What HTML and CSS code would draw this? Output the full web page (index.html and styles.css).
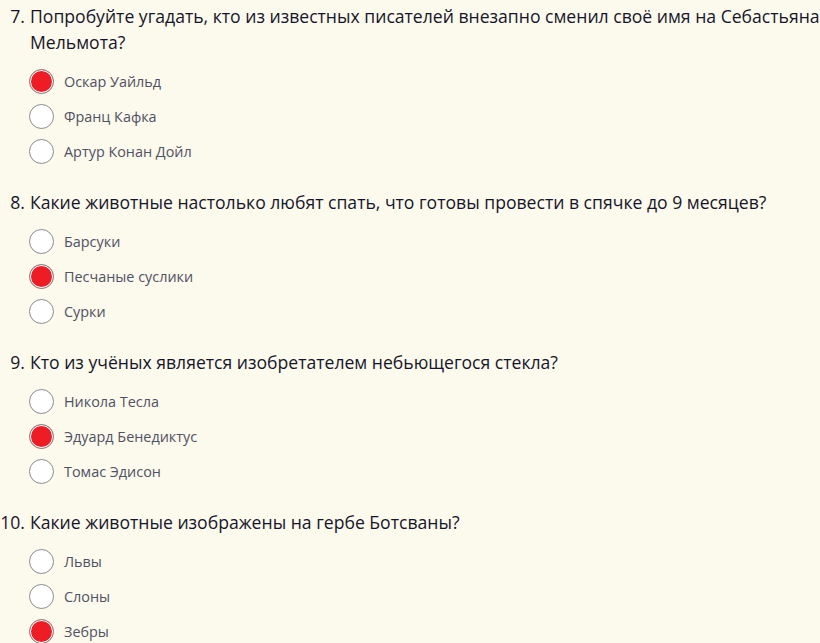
FILE: index.html
```html
<!DOCTYPE html>
<html>
<head>
    <meta charset="UTF-8">
    <title>Викторина</title>
    <link rel="stylesheet" href="styles.css">
</head>
<body>
    <div class="quiz">
        <div class="question">
            <div class="q-title"><span class="q-num">7.</span><span class="q-text">Попробуйте угадать, кто из известных писателей внезапно сменил своё имя на Себастьяна Мельмота?</span></div>
            <label class="option"><input type="radio" name="q7" checked><span>Оскар Уайльд</span></label>
            <label class="option"><input type="radio" name="q7"><span>Франц Кафка</span></label>
            <label class="option"><input type="radio" name="q7"><span>Артур Конан Дойл</span></label>
        </div>

        <div class="question">
            <div class="q-title"><span class="q-num">8.</span><span class="q-text">Какие животные настолько любят спать, что готовы провести в спячке до 9 месяцев?</span></div>
            <label class="option"><input type="radio" name="q8"><span>Барсуки</span></label>
            <label class="option"><input type="radio" name="q8" checked><span>Песчаные суслики</span></label>
            <label class="option"><input type="radio" name="q8"><span>Сурки</span></label>
        </div>

        <div class="question">
            <div class="q-title"><span class="q-num">9.</span><span class="q-text">Кто из учёных является изобретателем небьющегося стекла?</span></div>
            <label class="option"><input type="radio" name="q9"><span>Никола Тесла</span></label>
            <label class="option"><input type="radio" name="q9" checked><span>Эдуард Бенедиктус</span></label>
            <label class="option"><input type="radio" name="q9"><span>Томас Эдисон</span></label>
        </div>

        <div class="question">
            <div class="q-title"><span class="q-num">10.</span><span class="q-text">Какие животные изображены на гербе Ботсваны?</span></div>
            <label class="option"><input type="radio" name="q10"><span>Львы</span></label>
            <label class="option"><input type="radio" name="q10"><span>Слоны</span></label>
            <label class="option"><input type="radio" name="q10" checked><span>Зебры</span></label>
        </div>
    </div>
</body>
</html>
```

FILE: styles.css
```css
body {
    font-family: "Open Sans", "Liberation Sans", sans-serif;
    background-color: #fcf9ed;
    color: #16162a;
    margin: 0;
    padding: 0;
    overflow: hidden;
}

.quiz {
    padding-top: 4px;
}

.question {
    margin-bottom: 21px;
}

.q-title {
    display: flex;
    font-size: 17.6px;
    line-height: 26px;
    margin-top: -1px;
    margin-bottom: 9px;
}

.q-num {
    flex: 0 0 25px;
    text-align: right;
    margin-right: 5px;
}

.q-text {
    flex: 1;
}

.option {
    display: flex;
    align-items: center;
    height: 35px;
    padding-left: 29px;
    font-size: 14.4px;
    color: #4f5263;
    cursor: pointer;
}

.option input {
    appearance: none;
    -webkit-appearance: none;
    width: 25px;
    height: 25px;
    margin: 0 10px 0 0;
    border: 1.5px solid #8c8c8c;
    border-radius: 50%;
    background-color: #fff;
    box-sizing: border-box;
}

.option input:checked {
    background-color: #ee1c25;
    box-shadow: inset 0 0 0 1px #fff;
}
```
